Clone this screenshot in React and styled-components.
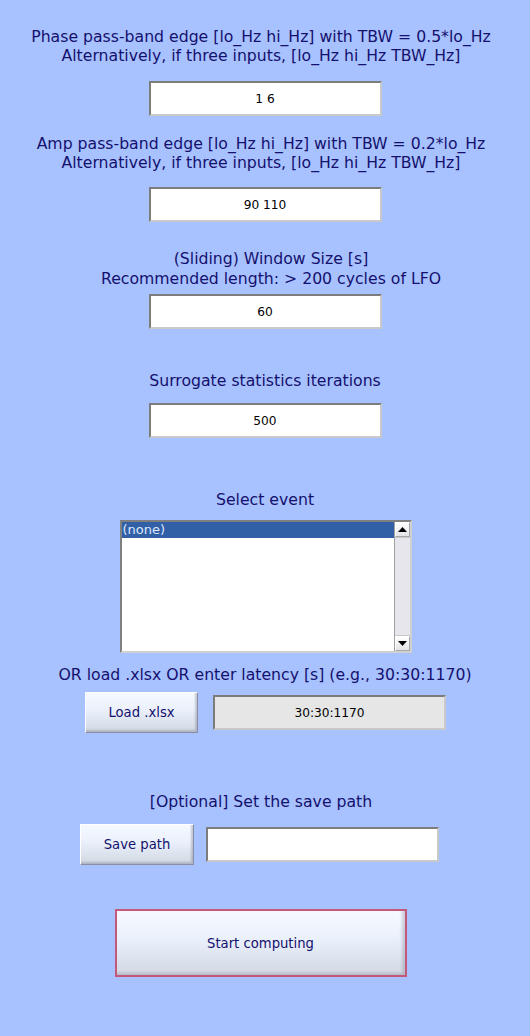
import React from "react";
import styled, { createGlobalStyle } from "styled-components";

const Global = createGlobalStyle`
  html, body { margin: 0; padding: 0; background: #a8c2ff; }
  body { width: 530px; height: 1036px; overflow: hidden; }
`;

const Page = styled.div`
  width: 530px;
  height: 1036px;
  background: #a8c2ff;
  display: flex;
  flex-direction: column;
  align-items: center;
  font-family: "DejaVu Sans", Verdana, sans-serif;
  box-sizing: border-box;
  padding-top: ${(p) => p.$top}px;
`;

const Label = styled.div`
  color: #14106e;
  font-size: 15.7px;
  line-height: ${(p) => p.$lh || 19}px;
  text-align: center;
  white-space: nowrap;
  margin-top: ${(p) => p.$mt || 0}px;
  margin-left: ${(p) => p.$ml || 0}px;
`;

const Field = styled.div`
  box-sizing: border-box;
  width: ${(p) => p.$w || 233}px;
  height: 35px;
  margin-top: ${(p) => p.$mt || 0}px;
  margin-left: ${(p) => p.$ml || 0}px;
  background: ${(p) => (p.$disabled ? "#e6e6e6" : "#ffffff")};
  border: 2px solid;
  border-color: #7c7c7c #c9c9c9 #c9c9c9 #7c7c7c;
  display: flex;
  align-items: center;
  justify-content: center;
  color: #000;
  font-size: 12.2px;
  flex-shrink: 0;
`;

const ListBox = styled.div`
  box-sizing: border-box;
  width: 292px;
  height: 133px;
  margin-top: ${(p) => p.$mt}px;
  margin-left: 1px;
  background: #fff;
  border: 2px solid;
  border-color: #808080 #d0d0d0 #d0d0d0 #808080;
  display: flex;
`;

const ListItems = styled.div`
  flex: 1;
  display: flex;
  flex-direction: column;
`;

const ListItem = styled.div`
  height: 16px;
  line-height: 15px;
  padding-left: 1px;
  background: ${(p) => (p.$selected ? "#3160a6" : "transparent")};
  color: ${(p) => (p.$selected ? "#dce6ff" : "#000")};
  font-size: 13px;
`;

const ScrollBar = styled.div`
  width: 15px;
  display: flex;
  flex-direction: column;
  background: #e8e8ee;
  border-left: 1px solid #a0a0a0;
`;

const ScrollButton = styled.div`
  height: 15px;
  box-sizing: border-box;
  background: linear-gradient(#ffffff, #e4e4e8);
  border: 1px solid;
  border-color: #ffffff #a8a8a8 #a8a8a8 #ffffff;
  display: flex;
  align-items: center;
  justify-content: center;
`;

const ScrollTrack = styled.div`
  flex: 1;
  background: #e6e6ec;
  border-top: 1px solid #c8c8c8;
  border-bottom: 1px solid #c8c8c8;
`;

const Row = styled.div`
  display: flex;
  align-items: center;
  gap: ${(p) => p.$gap}px;
  margin-top: ${(p) => p.$mt}px;
  margin-left: ${(p) => p.$ml || 0}px;
`;

const Button = styled.button`
  box-sizing: border-box;
  width: ${(p) => p.$w}px;
  height: ${(p) => p.$h}px;
  margin-top: ${(p) => p.$mt || 0}px;
  margin-left: ${(p) => p.$ml || 0}px;
  padding: 0;
  font-family: "DejaVu Sans", Verdana, sans-serif;
  font-size: 13.2px;
  color: #14106e;
  background: linear-gradient(#f6f9ff 0%, #eaf0fb 45%, #d2d8e2 100%);
  border: ${(p) => (p.$focus ? "2px solid #c4587a" : "1px solid")};
  border-color: ${(p) => (p.$focus ? "#c4587a" : "#ffffff #8c8ca4 #8c8ca4 #ffffff")};
  box-shadow: ${(p) =>
    p.$focus
      ? "inset -3px -2px 3px rgba(120,130,150,0.35)"
      : "inset -2px -2px 2px rgba(110,115,140,0.35)"};
  flex-shrink: 0;
`;

const Arrow = ({ down }) => (
  <svg width="9" height="5" viewBox="0 0 9 5">
    <polygon points={down ? "0,0 9,0 4.5,5" : "0,5 9,5 4.5,0"} fill="#000" />
  </svg>
);

export default function App() {
  return (
    <Page $top={27}>
      <Global />
      <Label $ml={-8}>
        Phase pass-band edge [lo_Hz hi_Hz] with TBW = 0.5*lo_Hz
        <br />
        Alternatively, if three inputs, [lo_Hz hi_Hz TBW_Hz]
      </Label>
      <Field $mt={16}>1 6</Field>

      <Label $mt={18} $ml={-8}>
        Amp pass-band edge [lo_Hz hi_Hz] with TBW = 0.2*lo_Hz
        <br />
        Alternatively, if three inputs, [lo_Hz hi_Hz TBW_Hz]
      </Label>
      <Field $mt={15}>90 110</Field>

      <Label $mt={27} $lh={20} $ml={12}>
        (Sliding) Window Size [s]
        <br />
        Recommended length: &gt; 200 cycles of LFO
      </Label>
      <Field $mt={5}>60</Field>

      <Label $mt={42}>Surrogate statistics iterations</Label>
      <Field $mt={13}>500</Field>

      <Label $mt={52}>Select event</Label>
      <ListBox $mt={11}>
        <ListItems>
          <ListItem $selected>(none)</ListItem>
        </ListItems>
        <ScrollBar>
          <ScrollButton>
            <Arrow />
          </ScrollButton>
          <ScrollTrack />
          <ScrollButton>
            <Arrow down />
          </ScrollButton>
        </ScrollBar>
      </ListBox>

      <Label $mt={12}>OR load .xlsx OR enter latency [s] (e.g., 30:30:1170)</Label>
      <Row $mt={8} $gap={15} $ml={1}>
        <Button $w={113} $h={41}>Load .xlsx</Button>
        <Field $disabled>30:30:1170</Field>
      </Row>

      <Label $mt={59} $ml={-8}>[Optional] Set the save path</Label>
      <Row $mt={13} $gap={12} $ml={-11}>
        <Button $w={114} $h={41}>Save path</Button>
        <Field />
      </Row>

      <Button $w={292} $h={68} $mt={44} $ml={-9} $focus>
        Start computing
      </Button>
    </Page>
  );
}
